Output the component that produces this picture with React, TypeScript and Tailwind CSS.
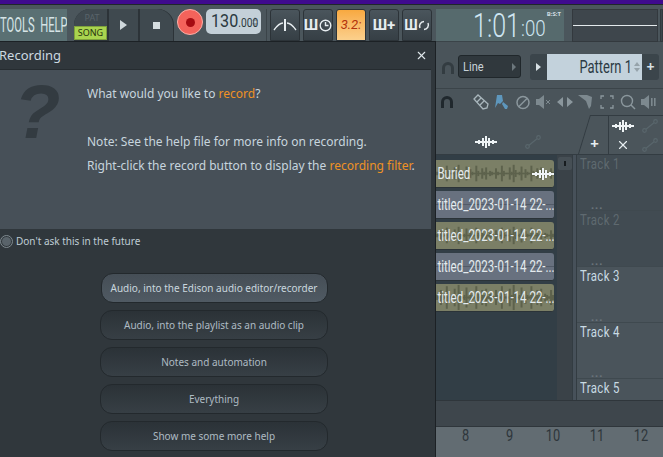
import { X } from 'lucide-react';
import type { ReactNode } from 'react';

const cond = "font-['Roboto',sans-serif]";
const buttons = [
  'Audio, into the playlist as an audio clip',
  'Notes and automation',
  'Everything',
  'Show me some more help',
];
const rulerNums = ['8', '9', '10', '11', '12'];

const seeds = [2, 1, 6, 2, 1, 9, 3, 1, 1, 7, 2, 10, 4, 1, 2, 8, 1, 5, 2, 1, 9, 3, 1, 6, 2, 7, 1, 3];

function Wave({ amp, color }: { amp: number; color: string }) {
  return (
    <svg className="absolute inset-0 h-full w-full" viewBox="0 0 120 28" preserveAspectRatio="none">
      <rect x="0" y="13.5" width="120" height="1" fill={color} />
      {amp > 1 &&
        Array.from({ length: 60 }).map((_, i) => {
          const h = (seeds[i % seeds.length] / 10) * amp;
          return <rect key={i} x={i * 2} y={14 - h} width="2" height={h * 2} fill={color} />;
        })}
    </svg>
  );
}

function WaveIcon({ className }: { className?: string }) {
  return (
    <svg className={className} width="22" height="12" viewBox="0 0 22 12" fill="#eef3f5">
      <rect x="0" y="5" width="22" height="2" />
      <rect x="3" y="4" width="2" height="4" />
      <rect x="7" y="2" width="2" height="8" />
      <rect x="10" y="0" width="2" height="12" />
      <rect x="13" y="2" width="2" height="8" />
      <rect x="17" y="4" width="2" height="4" />
    </svg>
  );
}

function LinkIcon({ className }: { className?: string }) {
  return (
    <svg className={className} width="16" height="14" viewBox="0 0 16 14" fill="none" stroke="#59666c" strokeWidth="1.2">
      <circle cx="2.5" cy="11.5" r="1.8" />
      <circle cx="13.5" cy="2.5" r="1.8" />
      <path d="M4 10.3 12 3.7" />
    </svg>
  );
}

function Magnet({ color = '#20282d' }: { color?: string }) {
  return (
    <svg width="14" height="14" viewBox="0 0 14 14" fill="none" stroke={color} strokeWidth="3">
      <path d="M2.5 13V7a4.5 4.5 0 0 1 9 0v6" />
    </svg>
  );
}

function Spinner() {
  return (
    <div className="flex flex-col gap-[2px]">
      <div className="h-0 w-0 border-x-[3px] border-b-[4px] border-x-transparent border-b-[#96a3ab]" />
      <div className="h-0 w-0 border-x-[3px] border-t-[4px] border-x-transparent border-t-[#96a3ab]" />
    </div>
  );
}

function ToolButton({ children, bg }: { children: ReactNode; bg?: string }) {
  return (
    <div className={`flex h-[32px] w-[30px] items-center justify-center rounded-t-[3px] border border-[#2c3338] ${bg ?? 'bg-gradient-to-b from-[#4a555c] to-[#363f45]'}`}>
      {children}
    </div>
  );
}

function Clip({ label, olive, amp }: { label: string; olive?: boolean; amp: number }) {
  return (
    <div className={`relative flex h-[28px] w-[118px] items-center overflow-hidden rounded-r-[3px] border-b border-[#2b3338] ${olive ? 'bg-[#7b7f66]' : 'bg-[#68717f]'}`}>
      <Wave amp={amp} color={olive ? '#5d624c' : '#525b68'} />
      <span className={`relative inline-block origin-left scale-x-[0.72] pl-[2px] ${cond} text-[16px] whitespace-nowrap text-[#e4ebee]`}>{label}</span>
    </div>
  );
}

function Track({ name, dim, cut }: { name: string; dim?: boolean; cut?: boolean }) {
  return (
    <div className={`flex shrink-0 flex-col pl-[3px] ${cut ? 'h-[21px]' : 'h-[56px] border-b border-[#3f494f]'} ${dim ? 'bg-[#414b52]' : 'bg-[#4a545b]'}`}>
      <span className={`inline-block origin-left scale-x-[0.76] ${cond} text-[15px] leading-[18px] tracking-[0.5px] whitespace-nowrap ${dim ? 'text-[#5f6a70]' : 'text-[#c9dbe4]'}`}>{name}</span>
      {!cut && <span className="mt-auto pl-[11px] text-[11px] leading-[10px] font-bold tracking-[1px] text-[#6b757b]">...</span>}
    </div>
  );
}

export default function App() {
  return (
    <div className="relative h-[457px] w-[663px] overflow-hidden bg-[#4a545a] font-['Noto_Sans',sans-serif]">
      <div className="h-[4px] bg-[#3f0a8e]" />

      {/* main toolbar */}
      <div className="flex h-[37px] items-start border-t border-[#20272b] bg-[#4b565c] pt-[4px]">
        <div className={`flex h-[32px] w-[67px] items-center overflow-hidden bg-[#5a7073] ${cond} text-[20px] text-[#d6e4e6]`}>
          <span className="inline-block origin-left scale-x-[0.56] whitespace-nowrap">TOOLS&nbsp;&nbsp;HELP</span>
        </div>
        <div className="ml-[7px] flex h-[32px] w-[100px] overflow-hidden rounded-t-[16px] bg-[#2c3338]">
          <div className="flex w-[33px] flex-col items-center">
            <span className="flex h-[17px] w-full items-center justify-center bg-[#3f494f] pl-[3px] text-[9px] text-[#59646a]">PAT</span>
            <span className="flex h-[14px] w-full items-center justify-center border border-[#7fa23c] bg-[#a9d44f] text-[9px] text-[#26320e]">SONG</span>
          </div>
          <div className="ml-[2px] flex w-[29px] items-center justify-center bg-[#3f494f]">
            <div className="h-0 w-0 border-y-[5px] border-l-[7px] border-y-transparent border-l-[#cfd8dc]" />
          </div>
          <div className="ml-[2px] flex w-[33px] items-center justify-center rounded-tr-[16px] bg-[#3f494f]">
            <div className="h-[7px] w-[7px] bg-[#d5dde0]" />
          </div>
        </div>
        <div className="ml-[3px] flex h-[26px] w-[26px] shrink-0 items-center justify-center rounded-full border border-[#ffb0a8] bg-[#f4635b]">
          <div className="h-[9px] w-[9px] rounded-full bg-[#a50c12]" />
        </div>
        <div className={`ml-[3px] flex h-[25px] w-[55px] items-center justify-between overflow-hidden rounded-[5px] bg-[#c4d0d8] pr-[3px] pl-[5px] ${cond} text-[#2b3940]`}>
          <span className="inline-block w-[40px] origin-left scale-x-[0.85] whitespace-nowrap">
            <span className="text-[19px] leading-none">130</span>
            <span className="text-[12px] leading-none">.000</span>
          </span>
          <Spinner />
        </div>
        <div className="ml-[5px] h-[32px] w-px bg-[#3b4449]" />
        <div className="ml-[3px] flex gap-[3px]">
          <ToolButton>
            <svg width="24" height="16" viewBox="0 0 24 16" fill="none" stroke="#e7edf0" strokeWidth="1.3">
              <path d="M1 13 Q6 6 10 6 M23 13 Q18 6 14 6" />
              <path d="M12 2v12" strokeWidth="2" />
            </svg>
          </ToolButton>
          <ToolButton>
            <span className="flex items-center gap-[1px]">
              <span className={`${cond} text-[15px] leading-none font-bold text-[#e7edf0]`}>Ш</span>
              <svg width="13" height="13" viewBox="0 0 13 13" fill="none" stroke="#e7edf0" strokeWidth="1.4">
                <circle cx="6.5" cy="6.5" r="5.3" />
                <path d="M6.5 3v3.5h3" />
              </svg>
            </span>
          </ToolButton>
          <ToolButton bg="bg-gradient-to-b from-[#f8a93f] to-[#fbd08c]">
            <span className={`${cond} text-[13px] italic text-[#b1320c]`}>3.2:</span>
          </ToolButton>
          <ToolButton>
            <span className={`${cond} text-[15px] font-bold text-[#e7edf0]`}>Ш+</span>
          </ToolButton>
          <ToolButton>
            <span className="flex items-center">
              <span className={`${cond} text-[14px] font-bold text-[#e7edf0]`}>Ш</span>
              <svg width="12" height="13" viewBox="0 0 12 13" fill="none" stroke="#e7edf0" strokeWidth="1.5">
                <path d="M2 9a4.6 4.6 0 0 1 4-6.5M10 4a4.6 4.6 0 0 1-4 6.5" />
              </svg>
            </span>
          </ToolButton>
        </div>
        <div className="relative ml-[4px] flex h-[32px] w-[128px] items-center bg-[#566a6d] pl-[37px] text-[#cfe6f2]">
          <span className={`inline-block w-[48px] origin-left scale-x-[0.76] ${cond} text-[33px] leading-none font-light whitespace-nowrap`}>1:01</span>
          <span className={`mt-[7px] inline-block w-[30px] origin-left scale-x-[0.85] ${cond} text-[22px] leading-none font-light whitespace-nowrap`}>:00</span>
          <span className="absolute top-[1px] right-[3px] text-[6px] font-bold text-[#cfdde2]">B:S:T</span>
        </div>
        <div className="ml-[8px] flex h-[33px] w-[86px] items-center border border-[#33393e] bg-[#3e464c]">
          <div className="h-px w-full bg-[#e4eaec]" />
        </div>
        <div className="ml-[2px] h-[33px] flex-1 border border-[#33393e] bg-[#3e464c]" />
      </div>

      {/* pattern row */}
      <div className="flex h-[47px] items-center border-t border-[#3b4449] pl-[441px]">
        <div className="mt-[6px] opacity-70">
          <Magnet color="#2a3237" />
        </div>
        <div className="mt-[3px] ml-[3px] flex h-[23px] w-[63px] items-center justify-between rounded-[3px] border border-[#20272b] bg-[#30383d] px-[4px] text-[#c8d3d9]">
          <span className={`inline-block origin-left scale-x-[0.85] ${cond} text-[13px]`}>Line</span>
          <div className="h-0 w-0 border-y-[4px] border-l-[4px] border-y-transparent border-l-[#6c777d]" />
        </div>
        <div className="mt-[3px] ml-[9px] flex h-[26px]">
          <div className="flex w-[17px] items-center justify-center rounded-l-[3px] bg-[#3b454b]">
            <div className="h-0 w-0 border-y-[4px] border-l-[5px] border-y-transparent border-l-[#d7e0e4]" />
          </div>
          <div className={`flex w-[95px] items-center justify-end gap-[2px] bg-[#c3d2dc] pr-[2px] ${cond} text-[18px] text-[#2c3a44]`}>
            <span className="inline-block origin-right scale-x-[0.72] whitespace-nowrap">Pattern 1</span>
            <Spinner />
          </div>
          <div className="flex w-[17px] items-center justify-center rounded-r-[3px] bg-[#3b454b] text-[14px] font-bold text-[#d7e0e4]">+</div>
        </div>
      </div>

      {/* playlist tools */}
      <div className="flex h-[27px] items-center border-t border-[#3b4449] pl-[440px]">
        <Magnet color="#20282d" />
        <div className="ml-[19px] flex items-center gap-[5px]">
          <svg width="16" height="16" viewBox="0 0 16 16" fill="none" stroke="#a9b6bc" strokeWidth="1.3">
            <path d="M1 5 5 1l10 9-1 4-4 1Z" />
            <path d="M4 8l4-4M7 11l4-4" />
          </svg>
          <svg width="16" height="16" viewBox="0 0 16 16" fill="#5e97bd">
            <path d="M3 1h5l1 6-3 3-2-1-3 5Z" />
            <path d="M9 8l5 4-1 3-2 0-3-5Z" />
          </svg>
          <svg width="16" height="15" viewBox="0 0 16 15" fill="none" stroke="#8b979d" strokeWidth="1.5">
            <circle cx="8" cy="7.5" r="6" />
            <path d="M4 11.5l8-8" />
          </svg>
          <svg width="16" height="14" viewBox="0 0 16 14" fill="#7d898f">
            <path d="M0 4h3l5-4v14l-5-4H0Z" />
            <path d="M10 5l4 4m0-4-4 4" stroke="#7d898f" fill="none" />
          </svg>
          <svg width="16" height="10" viewBox="0 0 16 10" fill="#8b979d">
            <path d="M0 5l6-5v10ZM16 5l-6-5v10Z" />
          </svg>
          <svg width="16" height="14" viewBox="0 0 16 14" fill="#7d898f">
            <path d="M0 0h9l5 2-1 9-2 3-3-8Z" />
          </svg>
          <svg width="16" height="14" viewBox="0 0 16 14" fill="none" stroke="#8b979d" strokeWidth="1.3">
            <path d="M2 4V1h3M11 1h3v3M14 10v3h-3M5 13H2v-3" />
          </svg>
          <svg width="16" height="16" viewBox="0 0 16 16" fill="none" stroke="#8b979d" strokeWidth="1.4">
            <circle cx="7" cy="7" r="5.5" />
            <path d="M11 11l4 4" />
          </svg>
          <svg width="16" height="14" viewBox="0 0 16 14" fill="#7d898f">
            <path d="M0 4h3l5-4v14l-5-4H0Z" />
            <rect x="10" y="3" width="1.6" height="8" />
            <rect x="13" y="3" width="1.6" height="8" />
          </svg>
        </div>
      </div>

      {/* tab row */}
      <div className="flex h-[40px] border-b border-[#333c42] pl-[436px]">
        <div className="relative h-full w-[142px]">
          <WaveIcon className="absolute top-[21px] left-[39px]" />
          <LinkIcon className="absolute top-[20px] left-[89px]" />
        </div>
        <div className="h-full w-[30px] bg-[#333c42] pt-[1px] pl-[1px] [clip-path:polygon(0_100%,40%_0,100%_0,100%_100%)]">
          <div className="flex h-full w-full items-end justify-center bg-[#4b555b] pb-[3px] pl-[2px] text-[15px] leading-none font-bold text-[#e6edf0] [clip-path:polygon(0_100%,40%_0,100%_0,100%_100%)]">+</div>
        </div>
        <div className="grid h-full flex-1 grid-cols-2 items-center justify-items-center border-t border-l border-[#333c42] bg-[#4b555b]">
          <WaveIcon />
          <LinkIcon />
          <X size={14} strokeWidth={2} color="#e6edf0" />
          <LinkIcon />
        </div>
      </div>

      {/* playlist body */}
      <div className="flex h-[245px] pl-[436px]">
        <div className="flex w-[121px] flex-col gap-[3px] bg-[#323e46] pt-[5px]">
          <div className="relative">
            <Clip label="Buried" olive amp={9} />
            <WaveIcon className="absolute top-[8px] right-[3px]" />
          </div>
          <Clip label="titled_2023-01-14 22-..." amp={1} />
          <Clip label="titled_2023-01-14 22-..." olive amp={9} />
          <Clip label="titled_2023-01-14 22-..." amp={1} />
          <Clip label="titled_2023-01-14 22-..." olive amp={13} />
        </div>
        <div className="flex w-[15px] justify-center bg-[#3a4248] pt-[2px]">
          <div className="flex h-[13px] w-[14px] items-center justify-center rounded-[2px] bg-[#464f55]">
            <div className="h-[5px] w-[2px] bg-[#171c1f]" />
          </div>
        </div>
        <div className="w-[5px] border-x border-[#333c42] bg-[#47515a]" />
        <div className="flex-1 overflow-hidden">
          <Track name="Track 1" dim />
          <Track name="Track 2" dim />
          <Track name="Track 3" />
          <Track name="Track 4" />
          <Track name="Track 5" cut />
        </div>
      </div>

      <div className="h-[27px] border-y border-[#2f363b] bg-[#3e464c]" />
      <div className="flex h-[30px] bg-[#626c72] pl-[443px]">
        {rulerNums.map((n) => (
          <span key={n} className={`w-[44px] text-center ${cond} text-[16px] leading-[18px] text-[#2e363b]`}>
            <span className="inline-block scale-x-[0.8]">{n}</span>
          </span>
        ))}
      </div>

      {/* recording dialog */}
      <div className="absolute top-[41px] left-0 flex h-[416px] w-[436px] flex-col border-t border-r border-[#1c2125] bg-[#30373c]">
        <div className="flex h-[27px] items-center justify-between pr-[7px] text-[13px] text-[#ccd9e0]">
          <span className="-ml-[1px]">Recording</span>
          <X size={13} strokeWidth={2} color="#e0e8ec" />
        </div>
        <div className="mr-[4px] flex h-[160px] border-t border-[#262c30] bg-[#475058] pl-[87px] text-[12px] text-[#c7d5de]">
          <span className="absolute top-[20px] left-[14px] font-['Liberation_Sans',sans-serif] text-[76px] leading-[100px] font-bold text-[#333b41] italic">?</span>
          <div className="flex flex-col pt-[14px]">
            <p className="leading-[20px]">
              What would you like to <span className="text-[#ee9225]">record</span>?
            </p>
            <p className="mt-[28px] leading-[20px]">Note: See the help file for more info on recording.</p>
            <p className="mt-[4px] leading-[20px]">
              Right-click the record button to display the <span className="text-[#ee9225]">recording filter</span>.
            </p>
          </div>
        </div>
        <div className="flex items-center gap-[3px] pt-[5px] text-[10px] text-[#bfccd4]">
          <div className="flex h-[13px] w-[13px] items-center justify-center rounded-full border border-[#7f8a90]">
            <div className="h-[9px] w-[9px] rounded-full bg-[#59636a]" />
          </div>
          <span>Don&apos;t ask this in the future</span>
        </div>
        <div className="mt-[24px] flex flex-col items-center gap-[7px] pr-[7px]">
          <div className="flex h-[30px] w-[227px] items-center justify-center rounded-[12px] border border-[#23292d] bg-gradient-to-b from-[#454e56] to-[#505a63] text-[10px] text-[#c9d6de]">
            Audio, into the Edison audio editor/recorder
          </div>
          {buttons.map((b) => (
            <div key={b} className="flex h-[30px] w-[228px] items-center justify-center rounded-[12px] border border-[#23292d] bg-gradient-to-b from-[#2b3237] to-[#373f45] text-[10px] text-[#aebbc3]">
              {b}
            </div>
          ))}
        </div>
      </div>
    </div>
  );
}
